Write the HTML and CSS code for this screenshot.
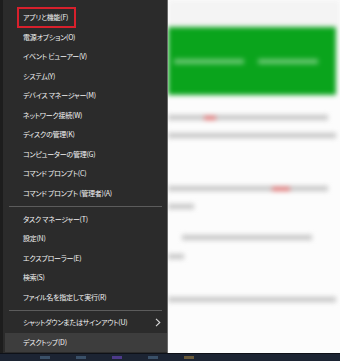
FILE: index.html
```html
<!DOCTYPE html>
<html lang="ja">
<head>
<meta charset="utf-8">
<link rel="stylesheet" href="styles.css">
</head>
<body>
<div class="screen">
  <div class="main">
    <div class="menu">
      <div class="item"><span class="hl-box">アプリと機能(F)</span></div>
      <div class="item">電源オプション(O)</div>
      <div class="item">イベント ビューアー(V)</div>
      <div class="item">システム(Y)</div>
      <div class="item">デバイス マネージャー(M)</div>
      <div class="item">ネットワーク接続(W)</div>
      <div class="item">ディスクの管理(K)</div>
      <div class="item">コンピューターの管理(G)</div>
      <div class="item">コマンド プロンプト(C)</div>
      <div class="item">コマンド プロンプト (管理者)(A)</div>
      <div class="sep"></div>
      <div class="item">タスク マネージャー(T)</div>
      <div class="item">設定(N)</div>
      <div class="item">エクスプローラー(E)</div>
      <div class="item">検索(S)</div>
      <div class="item">ファイル名を指定して実行(R)</div>
      <div class="sep sep2"></div>
      <div class="item sub">シャットダウンまたはサインアウト(U)
        <svg class="chev" width="6" height="9" viewBox="0 0 6 9"><path d="M1 0.8 L4.8 4.5 L1 8.2" fill="none" stroke="#d8d8d8" stroke-width="1.1"/></svg>
      </div>
      <div class="item active">デスクトップ(D)</div>
    </div>
    <div class="page">
      <div class="blur">
        <div class="topbar"></div>
        <div class="banner">
          <div class="btext b1"></div>
          <div class="btext b2"></div>
        </div>
        <div class="line l1"><span class="red r1"></span></div>
        <div class="line l2"></div>
        <div class="gap g1"></div>
        <div class="line l3"><span class="red r2"></span></div>
        <div class="line l4"></div>
        <div class="gap g2"></div>
        <div class="line l5"></div>
        <div class="line l6"></div>
        <div class="gap g3"></div>
        <div class="line l7"></div>
      </div>
    </div>
  </div>
  <div class="taskbar">
    <span class="tb t1"></span><span class="tb t2"></span><span class="tb t3"></span><span class="tb t4"></span><span class="tb t5"></span>
  </div>
</div>
</body>
</html>
```
FILE: styles.css
```css
html, body {
  margin: 0;
  padding: 0;
  background: #ffffff;
}
.screen {
  width: 340px;
  height: 361px;
  display: flex;
  flex-direction: column;
  overflow: hidden;
}
.main {
  display: flex;
  height: 354px;
}
.menu {
  width: 164px;
  border-left: 3px solid #1d1d1d;
  border-right: 1px solid #6b6b6b;
  background: #2b2b2b;
  padding-top: 8px;
  box-sizing: content-box;
  font-family: "Noto Sans CJK JP", "Noto Sans", sans-serif;
  font-feature-settings: "palt";
  font-size: 7px;
  letter-spacing: -0.25px;
  color: #f4f4f4;
  display: flex;
  flex-direction: column;
}
.item {
  height: 19.5px;
  line-height: 19.5px;
  padding-left: 20px;
  white-space: nowrap;
  position: relative;
  display: flex;
  align-items: center;
}
.hl-box {
  position: relative;
  line-height: 19px;
}
.hl-box::before {
  content: "";
  position: absolute;
  left: -6px;
  right: -8px;
  top: -1px;
  bottom: -1px;
  border: 2px solid #d8202c;
}
.sep {
  height: 6.6px;
  display: flex;
  align-items: center;
  padding: 0 5px 0 6px;
}
.sep::before {
  content: "";
  flex: 1;
  height: 1px;
  background: #5c5c5c;
}
.sep2 {
  height: 6px;
}
.sub {
  justify-content: space-between;
  padding-right: 6px;
}
.chev {
  display: block;
}
.active {
  background: #3d3d3d;
  margin-left: 2px;
  padding-left: 18px;
}
.page {
  flex: 1;
  position: relative;
  overflow: hidden;
  background: #fcfcfc;
}
.blur {
  filter: blur(2.5px);
  display: flex;
  flex-direction: column;
}
.topbar {
  height: 27px;
  background: #f4f4f4;
}
.banner {
  height: 68px;
  background: #0aa41c;
  display: flex;
  align-items: center;
  gap: 14px;
  padding-left: 6px;
  margin-right: 4px;
}
.btext {
  height: 5px;
  background: #6cc875;
}
.b1 { width: 70px; }
.b2 { width: 60px; }
.line {
  height: 5px;
  background: #c4c4c4;
  margin-top: 12px;
  position: relative;
}
.l1 { margin-top: 20px; width: 160px; }
.l2 { margin-top: 13px; width: 168px; }
.g1 { height: 38px; }
.l3 { margin-top: 10px; width: 160px; }
.l4 { margin-top: 13px; width: 26px; }
.g2 { height: 20px; }
.l5 { margin-top: 6px; width: 130px; margin-left: 14px; }
.l6 { margin-top: 14px; width: 16px; }
.g3 { height: 30px; }
.l7 { margin-top: 8px; width: 168px; }
.red {
  position: absolute;
  top: 1px;
  height: 4px;
  background: #e07070;
}
.r1 { left: 36px; width: 12px; }
.r2 { left: 104px; width: 18px; }
.taskbar {
  height: 7px;
  background: #1c2433;
  border-top: 1px solid #0e1118;
  display: flex;
  align-items: center;
  gap: 26px;
  padding-left: 40px;
}
.tb {
  width: 10px;
  height: 3px;
  background: #3a5068;
}
.t3 { background: #4d3a8a; }
.t5 { background: #6a5a3a; }
```
